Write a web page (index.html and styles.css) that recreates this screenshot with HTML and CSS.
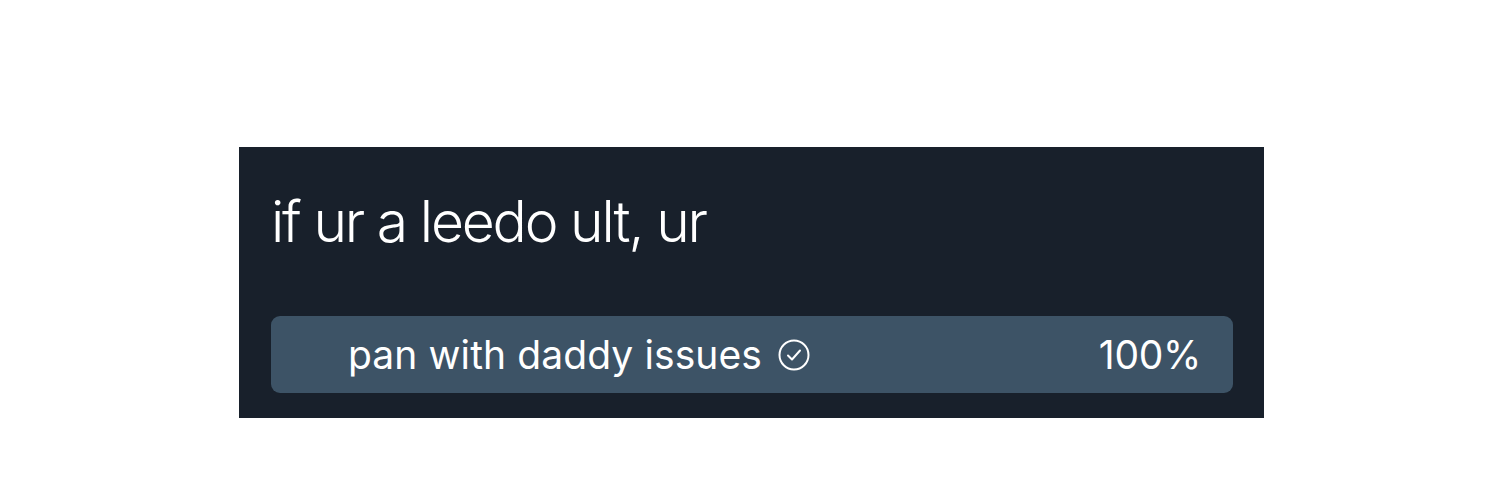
FILE: index.html
```html
<!DOCTYPE html>
<html>
<head>
<meta charset="utf-8">
<link rel="stylesheet" href="styles.css">
</head>
<body>
<div class="page">
  <div class="card">
    <div class="question">if ur a leedo ult, ur</div>
    <div class="option">
      <div class="label">
        <span>pan with daddy issues</span>
        <svg class="check" width="32" height="32" viewBox="0 0 32 32">
          <circle cx="16" cy="16" r="14.5" fill="none" stroke="#fff" stroke-width="2"/>
          <path d="M10 16.5 L14 20.5 L22 11.5" fill="none" stroke="#fff" stroke-width="2" stroke-linecap="round" stroke-linejoin="round"/>
        </svg>
      </div>
      <div class="pct">100%</div>
    </div>
  </div>
</div>
</body>
</html>
```
FILE: styles.css
```css
html, body {
  margin: 0;
  padding: 0;
  background: #ffffff;
}
.page {
  width: 1500px;
  height: 499px;
  padding-top: 147px;
  padding-left: 239px;
  box-sizing: border-box;
}
.card {
  width: 1025px;
  height: 271px;
  background: #18202b;
  box-sizing: border-box;
  padding: 0 31px 0 32px;
  display: flex;
  flex-direction: column;
  font-family: Inter, "Noto Sans", sans-serif;
  color: #ffffff;
}
.question {
  font-size: 57px;
  font-weight: 300;
  line-height: 70px;
  margin-top: 40px;
  letter-spacing: -2.2px;
}
.option {
  margin-top: 59px;
  height: 77px;
  background: #3d5366;
  border-radius: 9px;
  display: flex;
  align-items: center;
  justify-content: space-between;
  padding: 0 32px 0 77px;
}
.label {
  display: flex;
  align-items: center;
  gap: 16px;
  font-size: 39px;
  font-weight: 400;
  letter-spacing: 0.1px;
}
.check {
  display: block;
}
.pct {
  font-size: 39px;
  font-weight: 400;
  letter-spacing: -0.3px;
}
```
